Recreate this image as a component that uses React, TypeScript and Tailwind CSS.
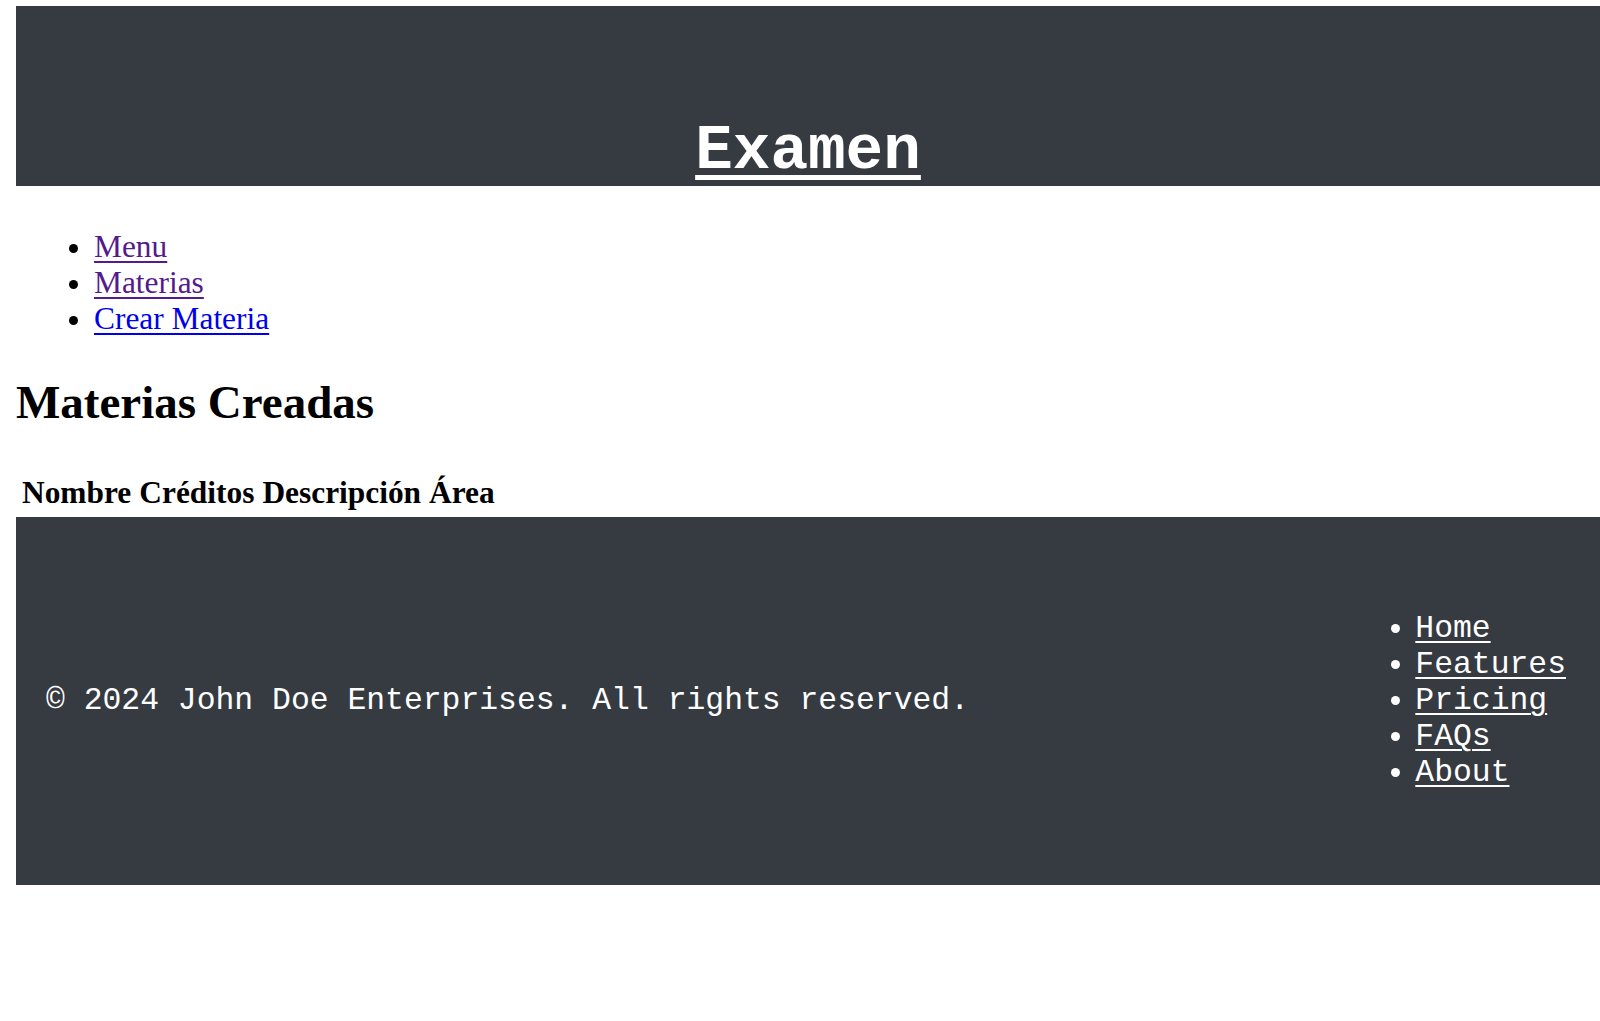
import React from 'react'

const navLinks = [
  { label: 'Menu', visited: true },
  { label: 'Materias', visited: true },
  { label: 'Crear Materia', visited: false },
]

const footerLinks = ['Home', 'Features', 'Pricing', 'FAQs', 'About']

const columns = ['Nombre', 'Créditos', 'Descripción', 'Área']

export default function App() {
  return (
    <div className="min-h-[1021px] bg-white pl-[16px] pt-[6px] text-black">
      {/* Header */}
      <header className="flex h-[180px] items-end justify-center bg-[#363a41] pb-[2px]">
        <a
          href="#"
          className="font-['Liberation_Mono',monospace] text-[62.7px] font-bold leading-none text-white underline decoration-[5px] underline-offset-[7px]"
        >
          Examen
        </a>
      </header>

      <ul className="mt-[43px] list-disc pl-[78px] font-['Liberation_Serif',serif] text-[31.4px] leading-[36px]">
        {navLinks.map(link => (
          <li key={link.label}>
            <a
              href="#"
              className={`underline decoration-[2px] underline-offset-[4px] ${
                link.visited ? 'text-[#551a8b]' : 'text-[#0000ee]'
              }`}
            >
              {link.label}
            </a>
          </li>
        ))}
      </ul>

      <h2 className="mt-[38px] font-['Liberation_Serif',serif] text-[47px] font-bold leading-[54px]">
        Materias Creadas
      </h2>

      <table className="mt-[40px] border-separate border-spacing-[4px] font-['Liberation_Serif',serif] text-[31.4px] leading-[36px]">
        <thead>
          <tr>
            {columns.map(col => (
              <th key={col} className="p-[2px] text-left font-bold">
                {col}
              </th>
            ))}
          </tr>
        </thead>
      </table>

      {/* Footer */}
      <footer className="flex h-[368px] items-center justify-between bg-[#363a41] pl-[30px] pr-[34px] font-['Liberation_Mono',monospace] text-[31.4px] leading-[36px] text-white">
        <p>© 2024 John Doe Enterprises. All rights reserved.</p>
        <ul className="list-disc pl-[78px]">
          {footerLinks.map(item => (
            <li key={item}>
              <a href="#" className="underline decoration-[2px] underline-offset-[4px]">
                {item}
              </a>
            </li>
          ))}
        </ul>
      </footer>
    </div>
  )
}
